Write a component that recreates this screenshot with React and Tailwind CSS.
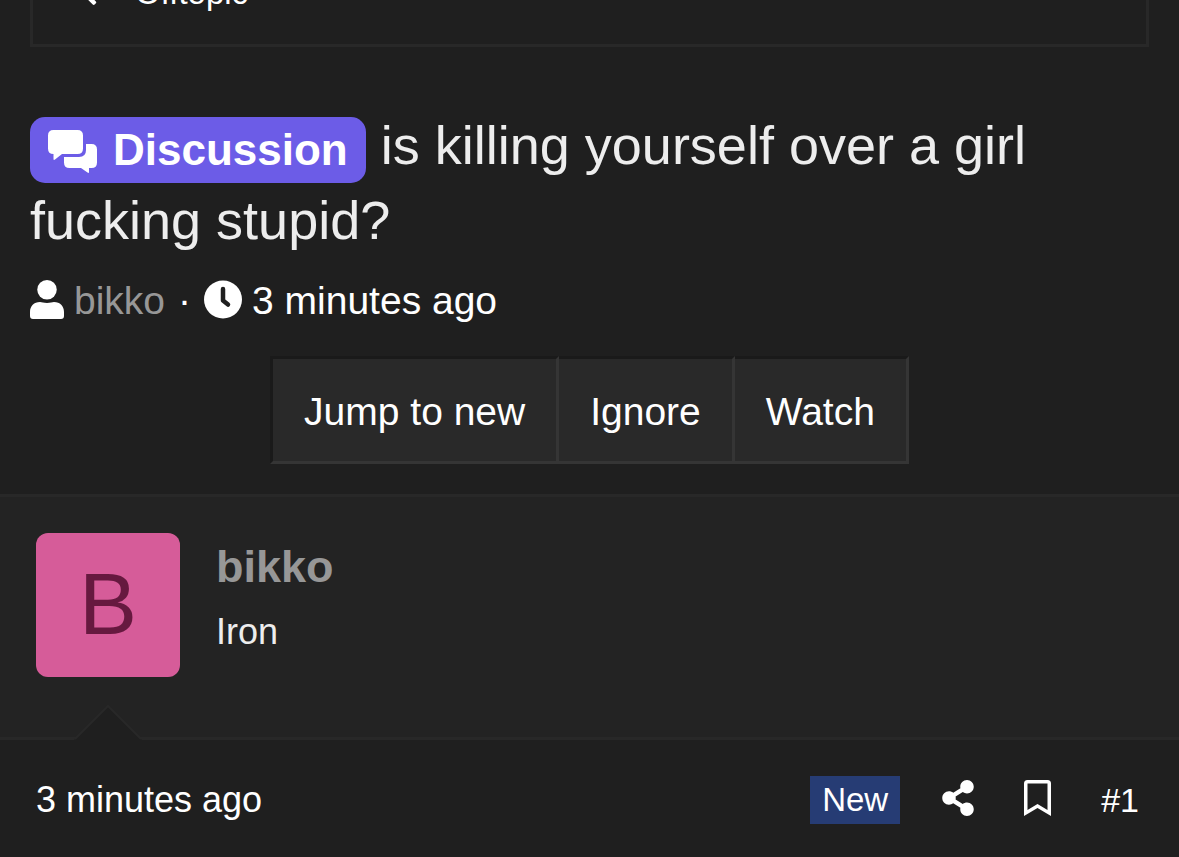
import { FaChevronLeft, FaShareAlt } from 'react-icons/fa'

const threadActions = ['Jump to new', 'Ignore', 'Watch']

export default function App() {
  return (
    <div className="min-h-screen overflow-hidden bg-[#1f1f1f] font-['Liberation_Sans',Arial,sans-serif] text-white">
      <Breadcrumb />
      <ThreadHeader />
      <Post />
    </div>
  )
}

/* Parent forum link, scrolled partly out of view */
function Breadcrumb() {
  return (
    <nav className="-mt-[66px] mx-[30px] border-3 border-[#282828] pt-8 pb-7">
      <a href="#" className="flex items-center gap-9 pl-[46px] text-[33px] leading-[47px]">
        <FaChevronLeft className="h-7 w-5" />
        Offtopic
      </a>
    </nav>
  )
}

function ThreadHeader() {
  return (
    <header className="px-[30px] pt-[61px] pb-[30px]">
      <h1 className="text-[54px] leading-[75px] text-[#ededed]">
        <a
          href="#"
          className="inline-flex h-[66px] items-center gap-4 rounded-[15px] bg-[#6c5ce7] pr-[18px] pl-[18px] align-middle text-[44px] leading-[60px] font-bold text-white"
        >
          <CommentsIcon />
          Discussion
        </a>{' '}
        is killing yourself over a girl fucking stupid?
      </h1>

      <div className="mt-4 flex items-start text-[39px] leading-[54px]">
        <UserIcon />
        <a href="#" className="ml-[10px] text-[#979797]">bikko</a>
        <span className="mx-[13px]">·</span>
        <ClockIcon />
        <time className="ml-[10px]">3 minutes ago</time>
      </div>

      <div className="mt-7 flex justify-center">
        {threadActions.map((label) => (
          <button
            key={label}
            type="button"
            className="border-y-3 border-r-3 border-t-[#1a1a1a] border-r-[#353535] border-b-[#353535] bg-[#292929] px-[31px] pt-1 text-[39px] leading-[98px] first:border-l-3 first:border-l-[#1a1a1a]"
          >
            {label}
          </button>
        ))}
      </div>
    </header>
  )
}

function Post() {
  return (
    <article>
      <section className="relative flex gap-9 border-y-3 border-[#282828] bg-[#232323] px-9 pt-9 pb-[60px]">
        <a
          href="#"
          className="flex size-36 items-center justify-center rounded-[12px] bg-[#d65c99] pb-1 text-[87px] leading-none text-[#66193f]"
        >
          B
        </a>
        <div className="pt-1">
          <h4 className="text-[45px] leading-[60px] font-bold text-[#979797]">
            <a href="#">bikko</a>
          </h4>
          <h5 className="mt-2 text-[36px] leading-[54px] text-[#ededed]">Iron</h5>
        </div>
        {/* Arrow pointing from the message up to the avatar */}
        <svg className="absolute -bottom-[3px] left-[74px]" width="68" height="36" viewBox="0 0 68 36">
          <path d="M0 36 34 2 68 36Z" fill="#1f1f1f" />
          <path d="M1 35 34 2 67 35" fill="none" stroke="#282828" strokeWidth="2" />
        </svg>
      </section>

      <footer className="flex items-center pt-9 pr-10 pb-8 pl-9 text-[36px] leading-[48px]">
        <time className="mr-auto">3 minutes ago</time>
        <span className="bg-[#263c74] px-3 text-[33px]">New</span>
        <button type="button" aria-label="Share" className="ml-[42px] pb-1">
          <FaShareAlt className="h-9 w-8" />
        </button>
        <button type="button" aria-label="Bookmark" className="ml-[50px] pb-1">
          <BookmarkIcon />
        </button>
        <a href="#" className="ml-[50px] text-[34px]">#1</a>
      </footer>
    </article>
  )
}

function CommentsIcon() {
  return (
    <svg width="49" height="46" viewBox="0 -3 49 46" fill="currentColor">
      <path d="M5.500 0H29.500Q35 0 35 5.500V18.500Q35 24 29.500 24H14L7 29.500Q5.500 30.500 5.500 29V24Q0 24 0 18.500V5.500Q0 0 5.500 0Z" />
      <path d="M38 14H43.500Q49 14 49 19.500V32.500Q49 38 43.500 38H41V42Q41 43.500 39.500 42.500L33 38H21.500Q16 38 16 32.500V27H31Q38 27 38 20Z" />
    </svg>
  )
}

function UserIcon() {
  return (
    <svg className="mt-[6px]" width="34" height="39" viewBox="0 0 34 39" fill="currentColor">
      <circle cx="17" cy="9.75" r="9.75" />
      <path d="M10 22C12 22 13.500 23 17 23S22 22 24 22C30 22 34 26 34 32V36Q34 39 31 39H3Q0 39 0 36V32C0 26 4 22 10 22Z" />
    </svg>
  )
}

function ClockIcon() {
  return (
    <svg className="mt-[6px]" width="38" height="39" viewBox="0 0 38 38">
      <circle cx="19" cy="19" r="19" fill="currentColor" />
      <path d="M19 8.500V20L24 24" fill="none" stroke="#1f1f1f" strokeWidth="4.500" strokeLinecap="round" strokeLinejoin="round" />
    </svg>
  )
}

function BookmarkIcon() {
  return (
    <svg width="27" height="36" viewBox="0 0 27 36" fill="currentColor" fillRule="evenodd">
      <path d="M3.500 0H23.500Q27 0 27 3.500V36L13.500 28 0 36V3.500Q0 0 3.500 0ZM3.500 3.500V30L13.500 24 23.500 30V3.500Z" />
    </svg>
  )
}
